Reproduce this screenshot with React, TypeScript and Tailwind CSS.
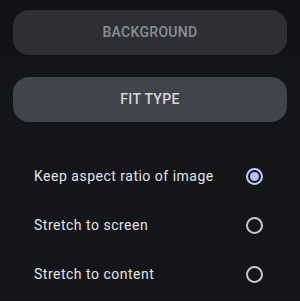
import React, { useState } from 'react';

const options = ['Keep aspect ratio of image', 'Stretch to screen', 'Stretch to content'];

function Radio({ checked }: { checked: boolean }) {
  return (
    <span
      className={`flex h-[17px] w-[17px] items-center justify-center rounded-full border-2 ${
        checked ? 'border-[#c3cdf6]' : 'border-[#c9c9cc]'
      }`}
    >
      {checked && <span className="h-[9px] w-[9px] rounded-full bg-[#b1c1fb]" />}
    </span>
  );
}

export default function App() {
  const [selected, setSelected] = useState(0);

  return (
    <div className="h-[301px] w-[300px] bg-[#111216] font-['Roboto',sans-serif]">
      <div className="px-[13px] pt-[10px]">
        <button className="flex h-[45px] w-full items-center justify-center rounded-[16px] bg-[#2e2f35] text-[14px] font-medium tracking-[0.3px] text-[#8c8d93]">
          BACKGROUND
        </button>
      </div>
      <div className="mt-[2px] bg-[#141519] px-[13px] pt-[20px]">
        <button className="flex h-[45px] w-full items-center justify-center rounded-[16px] bg-[#42444b] text-[14px] font-medium tracking-[0.3px] text-[#d6d7dc]">
          FIT TYPE
        </button>
        <div className="mt-[30px] flex flex-col">
          {options.map((o, i) => (
            <div
              key={o}
              onClick={() => setSelected(i)}
              className="flex h-[49px] items-center justify-between pl-[21px] pr-[24px]"
            >
              <span className="text-[14px] tracking-[0.5px] text-[#e3e3e6]">{o}</span>
              <Radio checked={selected === i} />
            </div>
          ))}
        </div>
      </div>
    </div>
  );
}
